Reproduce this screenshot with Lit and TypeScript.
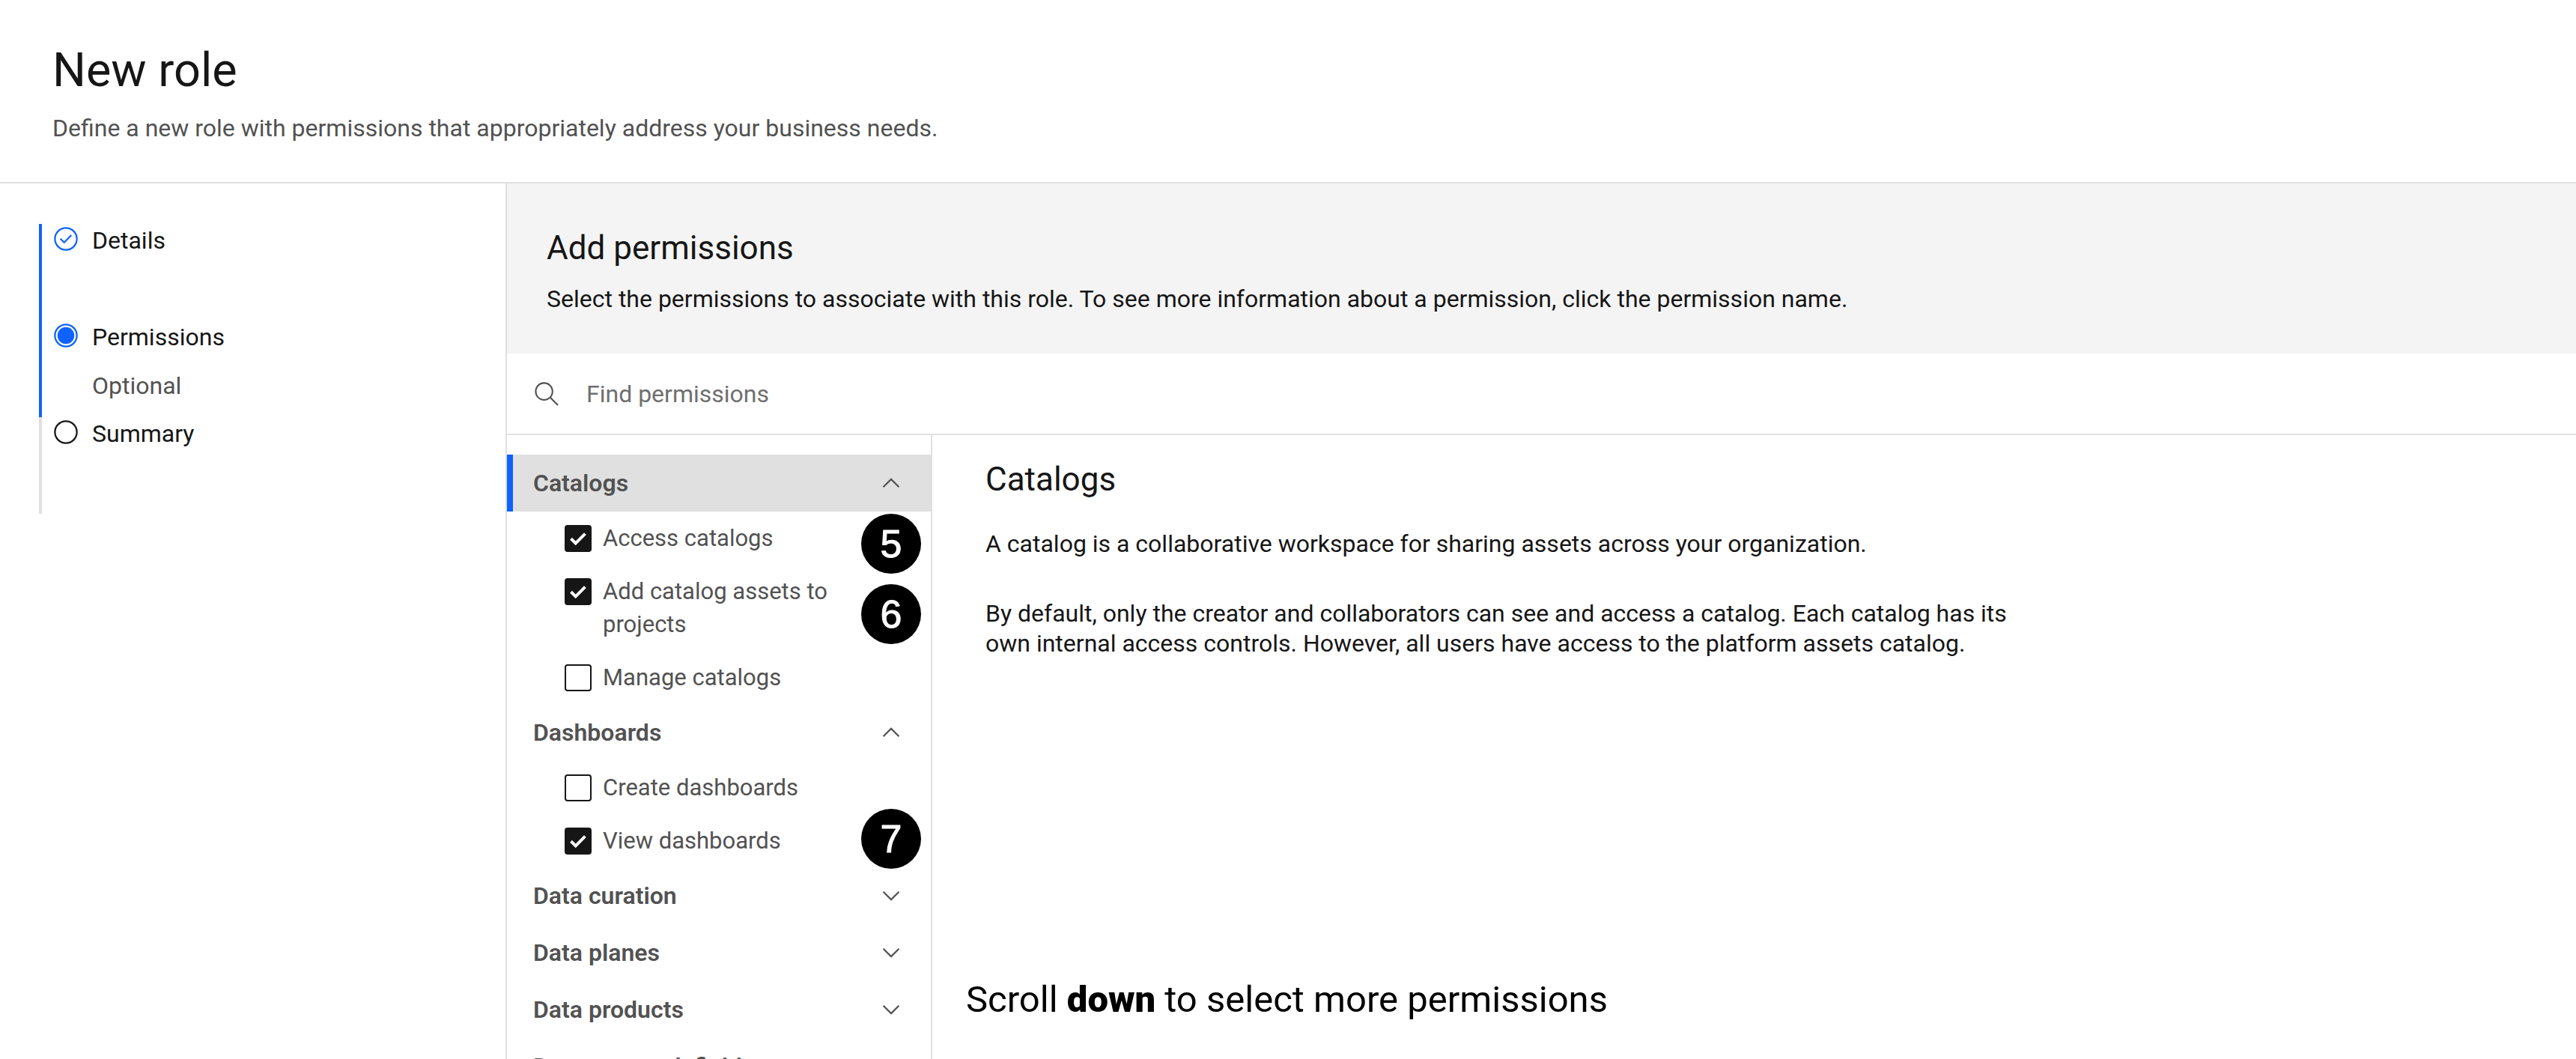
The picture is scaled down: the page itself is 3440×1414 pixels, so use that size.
import { LitElement, html, css, svg, nothing } from "lit";
import { customElement, state } from "lit/decorators.js";
import { classMap } from "lit/directives/class-map.js";

interface Permission {
  id: string;
  name: string;
  checked: boolean;
  callout?: { number: number; top: number };
}

interface Group {
  name: string;
  open: boolean;
  items: Permission[];
}

interface Step {
  name: string;
  status: "complete" | "current" | "upcoming";
  note?: string;
}

const STEPS: Step[] = [
  { name: "Details", status: "complete" },
  { name: "Permissions", status: "current", note: "Optional" },
  { name: "Summary", status: "upcoming" },
];

const GROUPS: Group[] = [
  {
    name: "Catalogs",
    open: true,
    items: [
      { id: "access-catalogs", name: "Access catalogs", checked: true, callout: { number: 5, top: -11 } },
      { id: "add-assets", name: "Add catalog assets to projects", checked: true, callout: { number: 6, top: 12 } },
      { id: "manage-catalogs", name: "Manage catalogs", checked: false },
    ],
  },
  {
    name: "Dashboards",
    open: true,
    items: [
      { id: "create-dashboards", name: "Create dashboards", checked: false },
      { id: "view-dashboards", name: "View dashboards", checked: true, callout: { number: 7, top: -21 } },
    ],
  },
  { name: "Data curation", open: false, items: [] },
  { name: "Data planes", open: false, items: [] },
  { name: "Data products", open: false, items: [] },
  { name: "Data source definitions", open: false, items: [] },
];

const stepGlyph = {
  complete: svg`<circle cx="8" cy="8" r="6.5" /><path d="M4.7 7.9 7 10.1 11.2 5.8" />`,
  current: svg`<circle cx="8" cy="8" r="6.5" /><circle class="dot" cx="8" cy="8" r="5" />`,
  upcoming: svg`<circle cx="8" cy="8" r="6.5" />`,
};

@customElement("app-root")
export class AppRoot extends LitElement {
  static styles = css`
    :host {
      display: flex;
      flex-direction: column;
      height: 100vh;
      overflow: hidden;
      background: #ffffff;
      color: #161616;
      font-family: Roboto, "Liberation Sans", sans-serif;
      font-size: 32px;
      line-height: 40px;
    }
    *,
    *::before {
      box-sizing: border-box;
    }
    h1,
    h2,
    h3,
    p,
    ol,
    ul {
      margin: 0;
      padding: 0;
      font-weight: 400;
      list-style: none;
    }
    .icon {
      display: block;
      width: 36px;
      height: 36px;
      flex: none;
    }

    .page-header {
      flex: none;
      display: flex;
      flex-direction: column;
      gap: 19px;
      padding: 56px 70px 52px;
      border-bottom: 2px solid #e0e0e0;
    }
    .page-title {
      font-size: 63px;
      line-height: 76px;
    }
    .page-description {
      color: #525252;
    }

    .body {
      flex: 1;
      min-height: 0;
      display: flex;
    }

    .progress {
      flex: 0 0 677px;
      padding: 54px 52px;
      border-right: 2px solid #e0e0e0;
    }
    .step {
      display: flex;
      gap: 17px;
      min-height: 129px;
      padding: 2px 0 0 14px;
      border-left: 4px solid #0f62fe;
    }
    .step.upcoming {
      border-color: #e0e0e0;
    }
    .step .icon {
      fill: none;
      stroke: #0f62fe;
      stroke-width: 1;
    }
    .step.upcoming .icon {
      stroke: #161616;
    }
    .step .dot {
      fill: #0f62fe;
      stroke: none;
    }
    .step-text {
      display: flex;
      flex-direction: column;
      gap: 25px;
    }
    .step-note {
      color: #525252;
    }

    .main {
      flex: 1;
      min-width: 0;
      display: flex;
      flex-direction: column;
    }
    .intro {
      flex: none;
      display: flex;
      flex-direction: column;
      gap: 20px;
      padding: 58px 53px 53px;
      background: #f4f4f4;
    }
    .section-title {
      font-size: 44px;
      line-height: 56px;
    }

    .search {
      flex: none;
      display: flex;
      align-items: center;
      gap: 35px;
      height: 109px;
      padding: 0 35px;
      border-bottom: 2px solid #e0e0e0;
    }
    .search .icon {
      fill: #525252;
    }
    .search-input {
      flex: 1;
      min-width: 0;
      padding: 0;
      border: 0;
      outline: none;
      background: none;
      color: #161616;
      font: inherit;
      appearance: none;
    }
    .search-input::placeholder {
      color: #6f6f6f;
      opacity: 1;
    }

    .columns {
      flex: 1;
      min-height: 0;
      display: flex;
    }
    .groups {
      flex: 0 0 568px;
      padding-top: 26px;
      border-right: 2px solid #e0e0e0;
      overflow-y: auto;
      scrollbar-width: none;
    }
    .group-toggle {
      display: flex;
      align-items: center;
      justify-content: space-between;
      width: 100%;
      height: 76px;
      padding: 0 35px 0 27px;
      border: 0;
      border-left: 8px solid transparent;
      background: none;
      color: #525252;
      font: inherit;
      font-weight: 600;
      text-align: left;
      white-space: nowrap;
      cursor: pointer;
    }
    .group-toggle.selected {
      border-left-color: #0f62fe;
      background-color: #e0e0e0;
    }
    .group-toggle .icon {
      fill: #525252;
    }

    .items {
      display: flex;
      flex-direction: column;
      gap: 27px;
      padding: 14px 0 13px;
      font-size: 31px;
      line-height: 44px;
      color: #525252;
    }
    .item {
      position: relative;
      padding: 0 97px 0 77px;
    }
    .item-label {
      display: flex;
      gap: 15px;
      cursor: pointer;
    }
    .box {
      flex: none;
      display: grid;
      width: 36px;
      height: 36px;
      margin-top: 4px;
    }
    .box-input {
      grid-area: 1 / 1;
      width: 36px;
      height: 36px;
      margin: 0;
      border: 2px solid #161616;
      border-radius: 4px;
      background: #ffffff;
      appearance: none;
      cursor: pointer;
    }
    .box-input:checked {
      background: #161616;
    }
    .box .icon {
      grid-area: 1 / 1;
      fill: none;
      stroke: #ffffff;
      stroke-width: 4;
      pointer-events: none;
      visibility: hidden;
    }
    .box-input:checked + .icon {
      visibility: visible;
    }
    .callout {
      position: absolute;
      right: 13px;
      display: flex;
      align-items: center;
      justify-content: center;
      width: 80px;
      height: 80px;
      border-radius: 50%;
      background: #000000;
      color: #ffffff;
      font-family: "Liberation Sans", sans-serif;
      font-size: 52px;
      line-height: 60px;
      -webkit-text-stroke: 1px #ffffff;
    }

    .detail {
      position: relative;
      flex: 1;
      min-width: 0;
      padding: 31px 71px;
    }
    .detail-text {
      display: flex;
      flex-direction: column;
      gap: 53px;
      max-width: 1400px;
      margin-top: 38px;
    }
    .hint {
      position: absolute;
      left: 45px;
      bottom: 49px;
      color: #000000;
      font-size: 49px;
      line-height: 60px;
    }
    .hint-strong {
      font-weight: 900;
    }
  `;

  @state() private groups: Group[] = GROUPS;
  @state() private selected = "Catalogs";

  private toggle(name: string) {
    this.selected = name;
    this.groups = this.groups.map((g) => (g.name === name ? { ...g, open: !g.open } : g));
  }

  private renderStep(step: Step) {
    return html`
      <li class="step ${step.status}" aria-current=${step.status === "current" ? "step" : nothing}>
        <svg class="icon" viewBox="0 0 16 16" aria-hidden="true">${stepGlyph[step.status]}</svg>
        <div class="step-text">
          <span>${step.name}</span>
          ${step.note ? html`<span class="step-note">${step.note}</span>` : nothing}
        </div>
      </li>
    `;
  }

  private renderItem(item: Permission) {
    return html`
      <li class="item">
        <label class="item-label" for=${item.id}>
          <span class="box">
            <input class="box-input" type="checkbox" id=${item.id} ?checked=${item.checked} />
            <svg class="icon" viewBox="0 0 36 36" aria-hidden="true"><path d="M8.5 18.3 14.7 24.4 27.4 11.7" /></svg>
          </span>
          <span>${item.name}</span>
        </label>
        ${item.callout
          ? html`<span class="callout" style="top: ${item.callout.top}px">${item.callout.number}</span>`
          : nothing}
      </li>
    `;
  }

  private renderGroup(group: Group) {
    return html`
      <li>
        <button
          type="button"
          class=${classMap({ "group-toggle": true, selected: group.name === this.selected })}
          aria-expanded=${group.open ? "true" : "false"}
          @click=${() => this.toggle(group.name)}
        >
          <span>${group.name}</span>
          <svg class="icon" viewBox="0 0 16 16" aria-hidden="true">
            ${group.open
              ? svg`<path d="M8 5 13 10 12.3 10.7 8 6.4 3.7 10.7 3 10z" />`
              : svg`<path d="M8 11 3 6 3.7 5.3 8 9.6 12.3 5.3 13 6z" />`}
          </svg>
        </button>
        ${group.open && group.items.length
          ? html`<ul class="items">${group.items.map((item) => this.renderItem(item))}</ul>`
          : nothing}
      </li>
    `;
  }

  render() {
    return html`
      <header class="page-header">
        <h1 class="page-title">New role</h1>
        <p class="page-description">
          Define a new role with permissions that appropriately address your business needs.
        </p>
      </header>
      <div class="body">
        <nav class="progress" aria-label="Progress">
          <ol>${STEPS.map((step) => this.renderStep(step))}</ol>
        </nav>
        <main class="main">
          <div class="intro">
            <h2 class="section-title">Add permissions</h2>
            <p>
              Select the permissions to associate with this role. To see more information about a permission, click the
              permission name.
            </p>
          </div>
          <label class="search" for="find">
            <svg class="icon" viewBox="0 0 16 16" aria-hidden="true">
              <path
                d="M15,14.3L10.7,10c1.9-2.3,1.6-5.8-0.7-7.7S4.2,0.7,2.3,3S0.7,8.8,3,10.7c2,1.7,5,1.7,7,0l4.3,4.3L15,14.3z M2,6.5C2,4,4,2,6.5,2S11,4,11,6.5S9,11,6.5,11S2,9,2,6.5z"
              />
            </svg>
            <input class="search-input" id="find" type="search" placeholder="Find permissions" aria-label="Find permissions" />
          </label>
          <div class="columns">
            <ul class="groups">
              ${this.groups.map((group) => this.renderGroup(group))}
            </ul>
            <section class="detail">
              <h3 class="section-title">Catalogs</h3>
              <div class="detail-text">
                <p>A catalog is a collaborative workspace for sharing assets across your organization.</p>
                <p>
                  By default, only the creator and collaborators can see and access a catalog. Each catalog has its own
                  internal access controls. However, all users have access to the platform assets catalog.
                </p>
              </div>
              <p class="hint">Scroll <strong class="hint-strong">down</strong> to select more permissions</p>
            </section>
          </div>
        </main>
      </div>
    `;
  }
}
